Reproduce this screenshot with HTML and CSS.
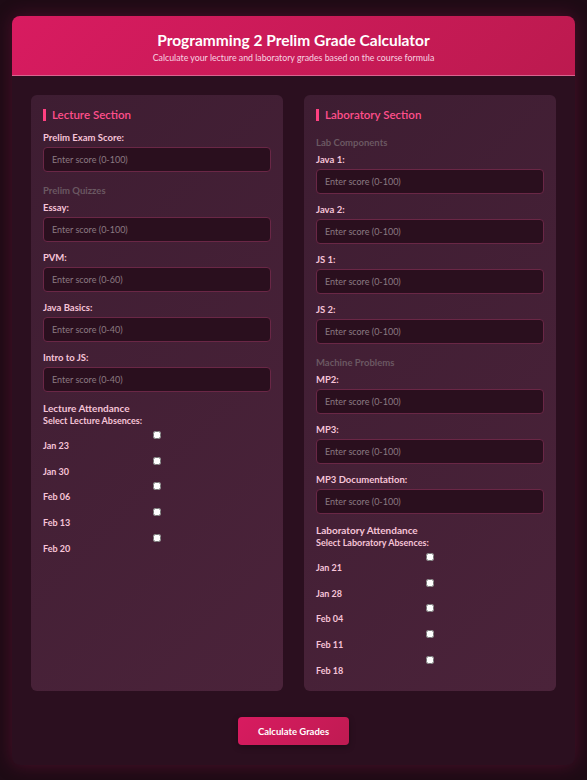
FILE: index.html
```html
<!DOCTYPE html>
<html lang="en">
<head>
    <meta charset="UTF-8">
    <meta name="viewport" content="width=device-width, initial-scale=1.0">
    <title>Programming 2 Prelim Grade Calculator</title>
    <link rel="stylesheet" href="styles.css">
</head>
<body>
    <div class="container">
        <div class="header">
            <h1>Programming 2 Prelim Grade Calculator</h1>
            <p>Calculate your lecture and laboratory grades based on the course formula</p>
        </div>

        <div class="content">
            <div class="sections">
                <div class="section">
                    <h2>Lecture Section</h2>

                    <div class="field">
                        <label for="prelim-exam">Prelim Exam Score:</label>
                        <input type="number" id="prelim-exam" placeholder="Enter score (0-100)">
                    </div>

                    <h3>Prelim Quizzes</h3>
                    <div class="field">
                        <label for="essay">Essay:</label>
                        <input type="number" id="essay" placeholder="Enter score (0-100)">
                    </div>
                    <div class="field">
                        <label for="pvm">PVM:</label>
                        <input type="number" id="pvm" placeholder="Enter score (0-60)">
                    </div>
                    <div class="field">
                        <label for="java-basics">Java Basics:</label>
                        <input type="number" id="java-basics" placeholder="Enter score (0-40)">
                    </div>
                    <div class="field">
                        <label for="intro-js">Intro to JS:</label>
                        <input type="number" id="intro-js" placeholder="Enter score (0-40)">
                    </div>

                    <div class="attendance">
                        <h4>Lecture Attendance</h4>
                        <p>Select Lecture Absences:</p>
                        <label class="day"><input type="checkbox"> Jan 23</label>
                        <label class="day"><input type="checkbox"> Jan 30</label>
                        <label class="day"><input type="checkbox"> Feb 06</label>
                        <label class="day"><input type="checkbox"> Feb 13</label>
                        <label class="day"><input type="checkbox"> Feb 20</label>
                    </div>
                </div>

                <div class="section">
                    <h2>Laboratory Section</h2>

                    <h3 class="first">Lab Components</h3>
                    <div class="field">
                        <label for="java1">Java 1:</label>
                        <input type="number" id="java1" placeholder="Enter score (0-100)">
                    </div>
                    <div class="field">
                        <label for="java2">Java 2:</label>
                        <input type="number" id="java2" placeholder="Enter score (0-100)">
                    </div>
                    <div class="field">
                        <label for="js1">JS 1:</label>
                        <input type="number" id="js1" placeholder="Enter score (0-100)">
                    </div>
                    <div class="field">
                        <label for="js2">JS 2:</label>
                        <input type="number" id="js2" placeholder="Enter score (0-100)">
                    </div>

                    <h3>Machine Problems</h3>
                    <div class="field">
                        <label for="mp2">MP2:</label>
                        <input type="number" id="mp2" placeholder="Enter score (0-100)">
                    </div>
                    <div class="field">
                        <label for="mp3">MP3:</label>
                        <input type="number" id="mp3" placeholder="Enter score (0-100)">
                    </div>
                    <div class="field">
                        <label for="mp3-doc">MP3 Documentation:</label>
                        <input type="number" id="mp3-doc" placeholder="Enter score (0-100)">
                    </div>

                    <div class="attendance">
                        <h4>Laboratory Attendance</h4>
                        <p>Select Laboratory Absences:</p>
                        <label class="day"><input type="checkbox"> Jan 21</label>
                        <label class="day"><input type="checkbox"> Jan 28</label>
                        <label class="day"><input type="checkbox"> Feb 04</label>
                        <label class="day"><input type="checkbox"> Feb 11</label>
                        <label class="day"><input type="checkbox"> Feb 18</label>
                    </div>
                </div>
            </div>

            <div class="actions">
                <button onclick="calculate()">Calculate Grades</button>
            </div>
        </div>
    </div>

    <script>
        // placeholder for grade calculation
        function calculate() {
            alert("Please fill in the scores first.");
        }
    </script>
</body>
</html>
```

FILE: styles.css
```css
* {
    box-sizing: border-box;
}
body {
    font-family: Lato, "Noto Sans", sans-serif;
    margin: 0;
    padding: 16px 12px 15px;
    background-color: #1e0b15;
}
.container {
    background-color: #2b0f1f;
    border-radius: 8px;
    box-shadow: 0 0 18px rgba(160, 20, 80, 0.35);
    overflow: hidden;
}
.header {
    background: linear-gradient(135deg, #d81b60, #bc1a4f);
    border-bottom: 1px solid #d9648f;
    text-align: center;
    padding: 15px 10px 12px;
    color: white;
}
.header h1 {
    margin: 0;
    font-size: 15.5px;
    font-weight: bold;
}
.header p {
    margin: 3px 0 0;
    font-size: 8.8px;
    color: #f7d3e1;
}
.content {
    padding: 19px 19px 20px;
}
.sections {
    display: grid;
    grid-template-columns: 1fr 1fr;
    gap: 21px;
}
.section {
    background: linear-gradient(135deg, #3e1d32, #4b233a);
    border-radius: 6px;
    padding: 14px 12px 14px;
}
.section h2 {
    margin: 0 0 11px;
    font-size: 11.5px;
    font-weight: 600;
    color: #ff4f8b;
    border-left: 3px solid #ff4081;
    padding-left: 6px;
    line-height: 12px;
}
.section h3 {
    margin: 13px 0 5px;
    font-size: 9.5px;
    color: #6b5862;
    line-height: 12px;
}
.section h3.first {
    margin-top: 16px;
}
.field {
    margin-bottom: 10px;
}
.field label {
    display: block;
    font-size: 9.5px;
    font-weight: bold;
    color: #f6c4d8;
    line-height: 12px;
    margin-bottom: 3px;
}
.field input {
    width: 100%;
    height: 25px;
    padding: 0 8px;
    background-color: #2a0f1e;
    border: 1px solid #6a2746;
    border-radius: 4px;
    color: #eee;
    font-family: inherit;
    font-size: 9px;
}
.field input::placeholder {
    color: #8a7a82;
}
.attendance {
    margin-top: 8px;
    color: #f6c4d8;
}
.attendance h4 {
    margin: 0;
    font-size: 10px;
    line-height: 13px;
}
.attendance p {
    margin: 0;
    font-size: 9px;
    font-weight: bold;
    line-height: 12px;
}
.day {
    display: flex;
    flex-direction: column;
    font-size: 9px;
    font-weight: bold;
    line-height: 12px;
    height: 25.7px;
}
.day input {
    width: 8px;
    height: 8px;
    margin: 4px auto 1px;
}
.actions {
    text-align: center;
    margin-top: 26px;
}
button {
    background: linear-gradient(135deg, #d81b60, #bf1b52);
    color: white;
    border: none;
    border-radius: 4px;
    width: 111px;
    height: 28px;
    font-family: inherit;
    font-size: 9.5px;
    font-weight: bold;
    cursor: pointer;
    box-shadow: 0 2px 6px rgba(0, 0, 0, 0.3);
}
button:hover {
    background: #c2185b;
}
```
